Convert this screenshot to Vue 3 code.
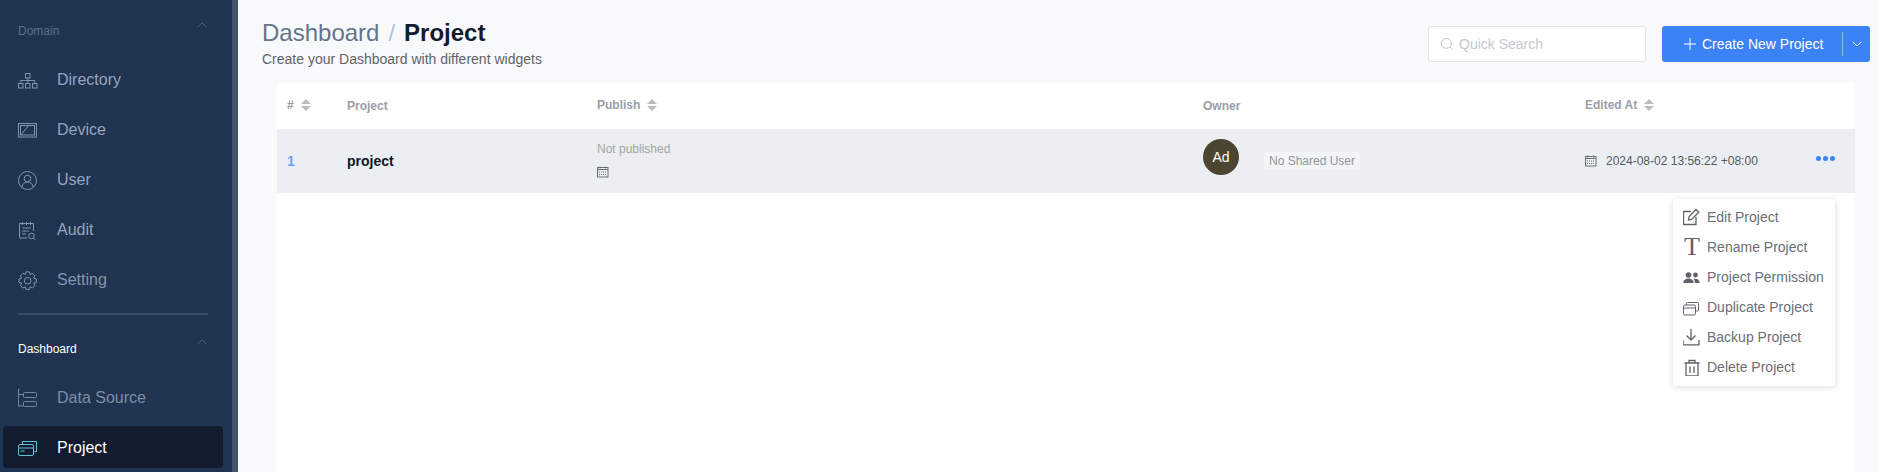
<script setup>
const domain = [
  { label: 'Directory', icon: 'dir' },
  { label: 'Device', icon: 'device' },
  { label: 'User', icon: 'user' },
  { label: 'Audit', icon: 'audit' },
  { label: 'Setting', icon: 'setting' },
]
const menu = ['Edit Project', 'Rename Project', 'Project Permission', 'Duplicate Project', 'Backup Project', 'Delete Project']
</script>

<template>
  <div class="page">
    <aside class="sidebar">
      <div class="nav">
        <div class="group-head domain-head">
          <span>Domain</span>
          <svg class="chev" width="10" height="6" viewBox="0 0 10 6"><path d="M.5 5.200 5 .8l4.500 4.400" /></svg>
        </div>
        <div v-for="item in domain" :key="item.label" class="nav-item" :class="item.icon">
          <svg class="nav-icon" width="20" height="20" viewBox="0 0 20 20">
            <g v-if="item.icon === 'dir'">
              <rect x="7.500" y="3.500" width="4.500" height="4.500" /><rect x=".5" y="13.500" width="4.500" height="4.500" /><rect x="7.500" y="13.500" width="4.500" height="4.500" /><rect x="14.500" y="13.500" width="4.500" height="4.500" />
              <path d="M9.750 8v5.500M2.750 13.500v-3h14v3" />
            </g>
            <g v-else-if="item.icon === 'device'">
              <rect x=".5" y="3.500" width="18" height="13.500" /><rect x="2.500" y="5.500" width="14" height="9.500" /><path d="M3 15 10.500 5.500" />
            </g>
            <g v-else-if="item.icon === 'user'">
              <circle cx="9.500" cy="10.500" r="9" /><circle cx="9.500" cy="8.500" r="3.300" /><path d="M3.800 17c.6-3 2.800-5 5.700-5s5.100 2 5.700 5" />
            </g>
            <g v-else-if="item.icon === 'audit'">
              <path d="M9 18H1.500V3.500h14V11M4.500 2v3M8.500 2v3M12.500 2v3M4 8h9M4 11h7M4 14h4" />
              <circle cx="13.500" cy="16" r="2.800" /><path d="m15.500 18 2.200 2.200" />
            </g>
            <g v-else>
              <path d="M8 1.800h3.400l.6 2.600 2.400-1 2.400 2.400-1.200 2.400 2.700.8v3.400l-2.700.7 1.200 2.500-2.400 2.400-2.400-1.200-.6 2.600H8l-.7-2.600-2.400 1.200-2.400-2.400 1.200-2.500-2.700-.7V9l2.700-.8-1.200-2.400 2.400-2.400 2.400 1z" />
              <circle cx="9.700" cy="10.700" r="3.300" />
            </g>
          </svg>
          <span>{{ item.label }}</span>
        </div>
        <div class="divider"></div>
        <div class="group-head dash-head">
          <span>Dashboard</span>
          <svg class="chev" width="10" height="6" viewBox="0 0 10 6"><path d="M.5 5.200 5 .8l4.500 4.400" /></svg>
        </div>
        <div class="nav-item datasource">
          <svg class="nav-icon" width="20" height="20" viewBox="0 0 20 20">
            <path d="M.5 1v17.500M.5 1h1M.5 6.500h5M.5 18h5" /><rect x="5.500" y="4.500" width="13" height="5" rx="1" /><rect x="5.500" y="13.500" width="13" height="5" rx="1" />
          </svg>
          <span>Data Source</span>
        </div>
        <div class="nav-item active">
          <svg class="nav-icon active-icon" width="20" height="20" viewBox="0 0 20 20">
            <path d="M4.500 6V3.500h14v10.200H15.500" />
            <rect x=".5" y="6.500" width="15" height="11" rx="1.500" /><path d="M.5 10h15M2.500 13h4" />
          </svg>
          <span>Project</span>
        </div>
      </div>
      <div class="scrollbar"></div>
    </aside>

    <main class="main">
      <header class="top">
        <div class="titles">
          <h1><span class="crumb">Dashboard</span><span class="slash">/</span><span class="current">Project</span></h1>
          <p>Create your Dashboard with different widgets</p>
        </div>
        <div class="actions">
          <div class="search">
            <svg width="14" height="14" viewBox="0 0 14 14"><circle cx="6.300" cy="6.300" r="5" /><path d="m10 10 2.500 2.500" /></svg>
            <span>Quick Search</span>
          </div>
          <div class="create">
            <svg width="14" height="14" viewBox="0 0 14 14"><path d="M7 1v12M1 7h12" /></svg>
            <span class="create-label">Create New Project</span>
            <span class="sep"></span>
            <svg class="down" width="10" height="6" viewBox="0 0 10 6"><path d="M.7.8 5 5l4.300-4.200" /></svg>
          </div>
        </div>
      </header>

      <section class="table">
        <div class="thead grid">
          <div class="th">#<span class="sort"><i class="up"></i><i class="dn"></i></span></div>
          <div class="th lite">Project</div>
          <div class="th">Publish<span class="sort"><i class="up"></i><i class="dn"></i></span></div>
          <div class="th lite">Owner</div>
          <div class="th">Edited At<span class="sort"><i class="up"></i><i class="dn"></i></span></div>
        </div>
        <div class="tr grid">
          <div class="idx">1</div>
          <div class="name">project</div>
          <div class="publish">
            <div>Not published</div>
            <svg class="cal" width="12" height="12" viewBox="0 0 12 12"><rect x=".5" y="1.500" width="10.500" height="9.500" /><path d="M.5 3.500h10.500M3 .5v2M8.500 .5v2" /><path class="dash" d="M2 6h7.500M2 8.500h7.500" /></svg>
          </div>
          <div class="owner">
            <div class="avatar">Ad</div>
            <div class="tag">No Shared User</div>
          </div>
          <div class="edited">
            <svg class="cal" width="12" height="12" viewBox="0 0 12 12"><rect x=".5" y="1.500" width="10.500" height="9.500" /><path d="M.5 3.500h10.500M3 .5v2M8.500 .5v2" /><path class="dash" d="M2 6h7.500M2 8.500h7.500" /></svg>
            <span>2024-08-02 13:56:22 +08:00</span>
            <div class="dots"><i></i><i></i><i></i></div>
          </div>
        </div>

        <div class="menu">
          <div v-for="(m, i) in menu" :key="m" class="menu-item">
            <span class="menu-icon">
              <svg v-if="i === 0" width="18" height="18" viewBox="1 0 18 18"><path d="M14 9v7.500H1.500V3.500H9" /><path d="M6.500 12 7 8.800 14 1.500l2.800 2.700-7.200 7.300z" /></svg>
              <span v-else-if="i === 1" class="t-glyph">T</span>
              <svg v-else-if="i === 2" width="18" height="18" viewBox=".5 -1 18 18" class="fill"><circle cx="6" cy="6" r="2.800" /><circle cx="13" cy="6" r="2.400" /><path d="M.8 14c0-3 2.400-4.500 5.200-4.500s5.200 1.500 5.200 4.500zM12.400 14c0-1.800-.4-3-1.500-4 2.800-1 6.300.2 6.300 4z" /></svg>
              <svg v-else-if="i === 3" class="thin" width="18" height="18" viewBox="0 0 18 18"><path d="M3.500 7V5.500c0-.6.400-1 1-1h10c.6 0 1 .4 1 1V12c0 .6-.4 1-1 1h-2" /><rect x=".5" y="7" width="12" height="10" rx="1.500" /><path d="M.5 10h12" /></svg>
              <svg v-else-if="i === 4" width="18" height="18" viewBox="1 0 18 18"><path d="M9 1v11M4.500 7.500 9 12l4.500-4.500M1 12v4.800h16V12" /></svg>
              <svg v-else width="18" height="18" viewBox="0 -1 18 18"><path d="M1.500 4h15M6 4V1.500h6V4M3 4v13h12V4M7 7.500v6.500M11 7.500v6.500" /></svg>
            </span>
            <span>{{ m }}</span>
          </div>
        </div>
      </section>
    </main>
  </div>
</template>

<style>
html, body { margin: 0; overflow: hidden; }
</style>

<style scoped>
* { box-sizing: border-box; }
.page {
  display: flex;
  width: 1879px;
  height: 472px;
  overflow: hidden;
  font-family: "Liberation Sans", Arial, sans-serif;
  background: #f8f9fb;
}
.sidebar { display: flex; width: 238px; flex: none; background: #203350; }
.nav { width: 232px; flex: none; padding: 0 9px 0 3px; }
.scrollbar { width: 6px; background: #45536c; }
.group-head {
  display: flex;
  justify-content: space-between;
  padding: 0 16px 0 15px;
  font-size: 12px;
  color: #5d7188;
}
.group-head span { line-height: 14px; }
.domain-head { padding-top: 24px; height: 55px; }
.dash-head { padding-top: 27px; height: 60px; color: #fff; }
.chev { margin-top: -2px; fill: none; stroke: #56677e; stroke-width: 1; }
.dash-head .chev { margin-top: -3px; }
.nav-item {
  display: flex;
  align-items: center;
  height: 50px;
  padding-left: 15px;
  font-size: 16px;
  color: #93a6bf;
  gap: 19px;
}
.nav-icon { fill: none; stroke: #8296ae; stroke-width: 1; flex: none; }
.nav-item.setting { color: #8395ad; }
.divider { height: 2px; margin: 8px 15px 0 15px; background: #374a66; }
.datasource { height: 46px; color: #7d8ea5; }
.datasource .nav-icon { stroke: #76879d; }
.active {
  height: 42px;
  margin-top: 5px;
  padding-top: 1px;
  background: #121c2e;
  border-radius: 4px;
  color: #fff;
}
.active .active-icon { stroke: #62c0da; }
.main { flex: 1; min-width: 0; display: flex; flex-direction: column; }
.top {
  display: flex;
  justify-content: space-between;
  height: 83px;
  padding: 0 9px 0 24px;
}
.titles h1 {
  margin: 18px 0 0;
  font-size: 24px;
  line-height: 30px;
  font-weight: 400;
  color: #64748b;
}
.slash { margin: 0 9px; color: #b4c2d3; }
.current { font-weight: 700; color: #111a2e; }
.titles p { margin: 3px 0 0; font-size: 14px; line-height: 16px; color: #5f6368; }
.actions { display: flex; gap: 16px; padding-top: 26px; }
.search {
  display: flex;
  align-items: center;
  gap: 5px;
  width: 218px;
  height: 36px;
  padding-left: 11px;
  background: #fff;
  border: 1px solid #e1e3e6;
  border-radius: 3px;
  font-size: 14px;
  color: #c5c8ce;
}
.search svg { fill: none; stroke: #c0c3c8; stroke-width: 1; }
.create {
  display: flex;
  align-items: center;
  width: 208px;
  height: 36px;
  padding-left: 21px;
  background: #3b82f6;
  border-radius: 3px;
  color: #fff;
  font-size: 14px;
}
.create svg { fill: none; stroke: #fff; stroke-width: 1; }
.create-label { margin-left: 5px; }
.sep { width: 1px; height: 24px; margin-left: 19px; background: #8fb8f9; }
.create .down { margin-left: 9px; }
.table {
  position: relative;
  flex: 1;
  margin: 0 24px 0 39px;
  background: #fff;
}
.grid {
  display: grid;
  grid-template-columns: 60px 250px 606px 382px 1fr;
  padding-left: 10px;
}
.thead { height: 46px; align-items: center; }
.th {
  display: flex;
  align-items: center;
  gap: 7px;
  font-size: 12px;
  font-weight: 700;
  color: #9a9ea8;
  margin-top: -2px;
}
.lite { padding-top: 2px; }
.sort { display: flex; flex-direction: column; gap: 2px; }
.sort i { display: block; width: 0; height: 0; border-left: 5.500px solid transparent; border-right: 5.500px solid transparent; }
.sort .up { border-bottom: 5px solid #b9bdc6; }
.sort .dn { border-top: 5px solid #b9bdc6; }
.tr { height: 64px; background: #ebeef3; align-items: center; }
.idx { font-size: 14px; font-weight: 700; color: #6f9ff5; }
.name { font-size: 14px; font-weight: 700; color: #10141f; }
.publish { font-size: 12px; color: #a3a5a8; margin-top: -3px; }
.publish .cal { display: block; margin-top: 10px; }
.cal { fill: none; stroke: #6a7078; stroke-width: 1; flex: none; }
.cal .dash { stroke-dasharray: 1 1; }
.owner { display: flex; align-items: flex-start; gap: 24px; height: 64px; padding-top: 10px; }
.avatar {
  width: 36px;
  height: 36px;
  border-radius: 50%;
  background: #4b4532;
  color: #fff;
  font-size: 14px;
  line-height: 36px;
  text-align: center;
}
.tag {
  margin-top: 12px;
  padding: 0 5px;
  height: 19px;
  line-height: 18px;
  font-size: 12px;
  color: #9296a0;
  background: #f3f4f6;
  border: 1px solid #eff0f3;
  border-radius: 3px;
}
.edited { display: flex; align-items: center; gap: 9px; font-size: 12px; color: #555a62; padding-right: 20px; }
.dots { display: flex; gap: 2px; margin-left: auto; margin-top: -5px; }
.dots i { width: 5px; height: 5px; border-radius: 50%; background: #3b82f6; }
.menu {
  position: absolute;
  top: 116px;
  left: 1396px;
  width: 162px;
  height: 187px;
  padding-top: 3px;
  background: #fff;
  border-radius: 3px;
  box-shadow: 0 1px 6px rgba(40, 50, 70, .18);
}
.menu-item {
  display: flex;
  align-items: center;
  height: 30px;
  padding-left: 10px;
  gap: 6px;
  font-size: 14px;
  color: #6a6e75;
}
.menu-icon { display: flex; justify-content: center; width: 18px; flex: none; }
.menu-icon svg { fill: none; stroke: #5f6369; stroke-width: 1.300; }
.menu-icon svg.thin { stroke-width: 1; }
.menu-icon svg.fill { fill: #5f6369; stroke: none; }
.t-glyph { font-family: "Liberation Serif", serif; font-size: 26px; line-height: 24px; color: #5f6369; }
</style>
